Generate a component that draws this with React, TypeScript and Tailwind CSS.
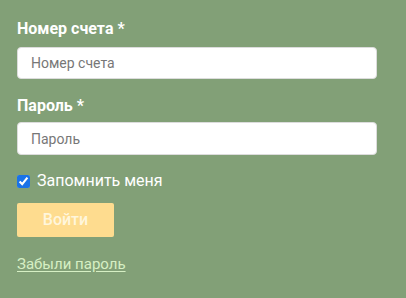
export default function App() {
  return (
    <main
      className="min-h-[298px] w-full bg-[#82a077] px-[17px] pt-[17px] pr-[29px]"
      style={{ fontFamily: "Roboto, 'Liberation Sans', sans-serif" }}
    >
      <form className="flex flex-col" onSubmit={(e) => e.preventDefault()}>
        <label className="text-[16px] leading-[24px] font-bold text-white">Номер счета *</label>
        <input
          type="text"
          placeholder="Номер счета"
          className="mt-[6px] h-[32px] w-full rounded-[4px] border border-[#dcdcdc] bg-white px-[13px] text-[14px] text-[#555] placeholder:text-[#777] outline-none"
        />

        <label className="mt-[15px] text-[16px] leading-[24px] font-bold text-white">Пароль *</label>
        <input
          type="password"
          placeholder="Пароль"
          className="mt-[4px] h-[33px] w-full rounded-[4px] border border-[#dcdcdc] bg-white px-[13px] text-[14px] text-[#555] placeholder:text-[#777] outline-none"
        />

        <label className="mt-[14px] flex items-center gap-[7px] text-[16px] leading-[24px] text-white">
          <input type="checkbox" defaultChecked className="m-0 h-[13px] w-[13px] accent-[#1a73e8]" />
          Запомнить меня
        </label>

        <button
          type="submit"
          className="mt-[10px] h-[34px] w-[97px] rounded-[2px] bg-[#fedc8f] text-[16px] font-medium text-[#fff6dc]"
        >
          Войти
        </button>

        <a href="#" className="mt-[16px] self-start text-[15px] leading-[22px] text-[#d6efc4] underline underline-offset-2">
          Забыли пароль
        </a>
      </form>
    </main>
  );
}
